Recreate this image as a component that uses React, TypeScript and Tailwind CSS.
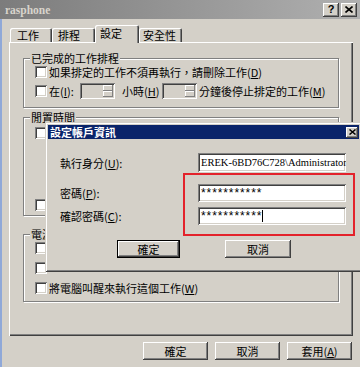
import React from "react";

const raised =
  "shadow-[inset_-1px_-1px_0_#404040,inset_1px_1px_0_#ffffff,inset_-2px_-2px_0_#808080]";
const defRaised =
  "shadow-[inset_0_0_0_1px_#000000,inset_-2px_-2px_0_#404040,inset_2px_2px_0_#ffffff,inset_-3px_-3px_0_#808080]";
const sunken =
  "shadow-[inset_1px_1px_0_#808080,inset_-1px_-1px_0_#ffffff,inset_2px_2px_0_#404040,inset_-2px_-2px_0_#d4d0c8]";
const smallRaised = "shadow-[inset_-1px_-1px_0_#808080,inset_1px_1px_0_#ffffff]";
const groupFrame = "border border-[#808080] shadow-[inset_1px_1px_0_#ffffff,1px_1px_0_#ffffff]";

function Check() {
  return <div className={`w-[12px] h-[12px] bg-white shrink-0 ${sunken}`} />;
}

function U({ c }: { c: string }) {
  return <span className="underline underline-offset-[1px]">{c}</span>;
}

function Spin() {
  return (
    <div className={`w-[35px] h-[16px] shrink-0 flex justify-end p-[2px] ${sunken}`}>
      <div className="w-[10px] flex flex-col">
        <div className={`flex-1 ${smallRaised}`} />
        <div className={`flex-1 ${smallRaised}`} />
      </div>
    </div>
  );
}

function Button({ children, w, def }: { children: React.ReactNode; w: string; def?: boolean }) {
  return (
    <div className={`${w} h-[18px] flex items-center justify-center ${def ? defRaised : raised}`}>
      {children}
    </div>
  );
}

function XGlyph() {
  return (
    <svg width="8" height="7" viewBox="0 0 8 7">
      <path d="M0.5 0.5 L7.5 6.5 M7.5 0.5 L0.5 6.5" stroke="#000" strokeWidth="1.6" />
    </svg>
  );
}

export default function App() {
  return (
    <div className="relative w-[360px] h-[367px] overflow-hidden bg-[#d4d0c8] text-[11px] leading-[14px] text-black font-['Noto_Sans_CJK_TC','Noto_Sans_CJK_SC',sans-serif]">
      {/* title bar */}
      <div className="h-[19px] flex items-center justify-between pl-[5px] pr-[3px] bg-linear-to-r from-[#7c7c7c] to-[#b0b0b0]">
        <span className="font-['Liberation_Serif',serif] font-bold text-[11.5px] text-[#d8d4cc]">rasphone</span>
        <div className="flex gap-[2px]">
          <div className={`w-[16px] h-[14px] bg-[#d4d0c8] flex items-center justify-center ${raised}`}>
            <span className="font-['Liberation_Sans',sans-serif] font-bold text-[11px] leading-[11px]">?</span>
          </div>
          <div className={`w-[16px] h-[14px] bg-[#d4d0c8] flex items-center justify-center ${raised}`}>
            <XGlyph />
          </div>
        </div>
      </div>

      <div className="flex">
        <div className="w-[2px] h-[348px] bg-[#8fa8d8]" />
        <div className="flex-1 flex flex-col">
          {/* tabs */}
          <div className="mt-[6px] h-[17px] flex items-end pl-[8px]">
            <div className="w-[42px] h-[14px] pl-[7px] rounded-t-[2px] shadow-[inset_1px_1px_0_#ffffff,inset_-1px_0_0_#404040,inset_-2px_0_0_#808080]">
              工作
            </div>
            <div className="w-[43px] h-[14px] pl-[6px] rounded-t-[2px] shadow-[inset_1px_1px_0_#ffffff,inset_-1px_0_0_#404040,inset_-2px_0_0_#808080]">
              排程
            </div>
            <div className="relative z-10 w-[44px] h-[18px] -mb-[1px] pl-[5px] pt-[1px] bg-[#d4d0c8] rounded-t-[2px] shadow-[inset_1px_1px_0_#ffffff,inset_-1px_0_0_#404040,inset_-2px_0_0_#808080]">
              設定
            </div>
            <div className="w-[43px] h-[14px] pl-[4px] rounded-t-[2px] shadow-[inset_1px_1px_0_#ffffff,inset_-1px_0_0_#404040,inset_-2px_0_0_#808080]">
              安全性
            </div>
          </div>

          {/* panel */}
          <div className="ml-[7px] w-[344px] h-[294px] pt-[16px] px-[14px] shadow-[inset_1px_1px_0_#ffffff,inset_-1px_-1px_0_#404040,inset_-2px_-2px_0_#808080]">
            {/* group 1 */}
            <div className={`${groupFrame} pb-[7px]`}>
              <div className="-mt-[8px] ml-[6px] px-[1px] w-fit bg-[#d4d0c8]">已完成的工作排程</div>
              <div className="h-[14px] flex items-center gap-[2px] pl-[11px]">
                <Check />
                <span>如果排定的工作不須再執行，請刪除工作(<U c="D" />)</span>
              </div>
              <div className="mt-[3px] h-[18px] flex items-center pl-[11px]">
                <Check />
                <span className="ml-[2px] w-[31px]">在(<U c="I" />):</span>
                <Spin />
                <span className="ml-[7px] w-[40px]">小時(<U c="H" />)</span>
                <Spin />
                <span className="ml-[2px]">分鐘後停止排定的工作(<U c="M" />)</span>
              </div>
            </div>

            {/* group 2 */}
            <div className={`${groupFrame} mt-[9px] pb-[3px]`}>
              <div className="-mt-[8px] ml-[6px] px-[1px] w-fit bg-[#d4d0c8]">閒置時間</div>
              <div className="mt-[2px] h-[14px] flex items-center pl-[11px]">
                <Check />
              </div>
              <div className="mt-[8px] h-[18px]" />
              <div className="mt-[32px] h-[14px] flex items-center pl-[11px]">
                <Check />
              </div>
            </div>

            {/* group 3 */}
            <div className={`${groupFrame} mt-[18px] pb-[7px]`}>
              <div className="-mt-[8px] ml-[6px] px-[1px] w-fit bg-[#d4d0c8]">電源</div>
              <div className="h-[13px] flex items-center pl-[11px]">
                <Check />
              </div>
              <div className="mt-[7px] h-[13px] flex items-center pl-[11px]">
                <Check />
              </div>
              <div className="mt-[7px] h-[13px] flex items-center gap-[2px] pl-[11px]">
                <Check />
                <span>將電腦叫醒來執行這個工作(<U c="W" />)</span>
              </div>
            </div>
          </div>

          {/* bottom buttons */}
          <div className="mt-[6px] flex justify-end gap-[7px] pr-[8px]">
            <Button w="w-[65px]">確定</Button>
            <Button w="w-[65px]">取消</Button>
            <Button w="w-[65px]">
              套用(<U c="A" />)
            </Button>
          </div>
        </div>
      </div>

      {/* overlay dialog */}
      <div className="absolute left-[45px] top-[122px] w-[317px] h-[150px] p-[3px] bg-[#d4d0c8] shadow-[inset_1px_1px_0_#d4d0c8,inset_-1px_-1px_0_#404040,inset_2px_2px_0_#ffffff,inset_-2px_-2px_0_#808080]">
        <div className="h-[14px] flex items-center justify-between pl-[2px] pr-[1px] bg-[#0a246a]">
          <span className="text-white font-bold">設定帳戶資訊</span>
          <div className={`w-[12px] h-[11px] bg-[#d4d0c8] flex items-center justify-center ${raised}`}>
            <svg width="7" height="6" viewBox="0 0 7 6">
              <path d="M0.5 0.5 L6.5 5.5 M6.5 0.5 L0.5 5.5" stroke="#000" strokeWidth="1.5" />
            </svg>
          </div>
        </div>
        <div className="pl-[12px]">
          <div className="mt-[14px] grid grid-cols-[138px_148px] items-center">
            <span>執行身分(<U c="U" />):</span>
            <div className={`h-[19px] bg-white pl-[3px] flex items-center overflow-hidden whitespace-nowrap ${sunken}`}>
              <span className="font-['Liberation_Serif',serif] text-[10.5px]">EREK-6BD76C728\Administrator</span>
            </div>
          </div>
          <div className="mt-[12px] grid grid-cols-[138px_148px] items-center">
            <span>密碼(<U c="P" />):</span>
            <div className={`h-[18px] bg-white pl-[3px] flex items-center ${sunken}`}>
              <span className="font-['Liberation_Sans',sans-serif] text-[12px] tracking-[0.9px] leading-[12px]">***********</span>
            </div>
          </div>
          <div className="mt-[5px] grid grid-cols-[138px_148px] items-center">
            <span>確認密碼(<U c="C" />):</span>
            <div className={`h-[18px] bg-white pl-[3px] flex items-center ${sunken}`}>
              <span className="font-['Liberation_Sans',sans-serif] text-[12px] tracking-[0.9px] leading-[12px]">***********</span>
              <div className="w-[1px] h-[12px] bg-black" />
            </div>
          </div>
          <div className="mt-[15px] flex gap-[45px] pl-[57px]">
            <Button w="w-[63px]" def>確定</Button>
            <Button w="w-[66px]">取消</Button>
          </div>
        </div>
      </div>

      {/* red annotation box */}
      <div className="absolute left-[183px] top-[173px] w-[172px] h-[63px] border-2 border-[#e3222b]" />
    </div>
  );
}
